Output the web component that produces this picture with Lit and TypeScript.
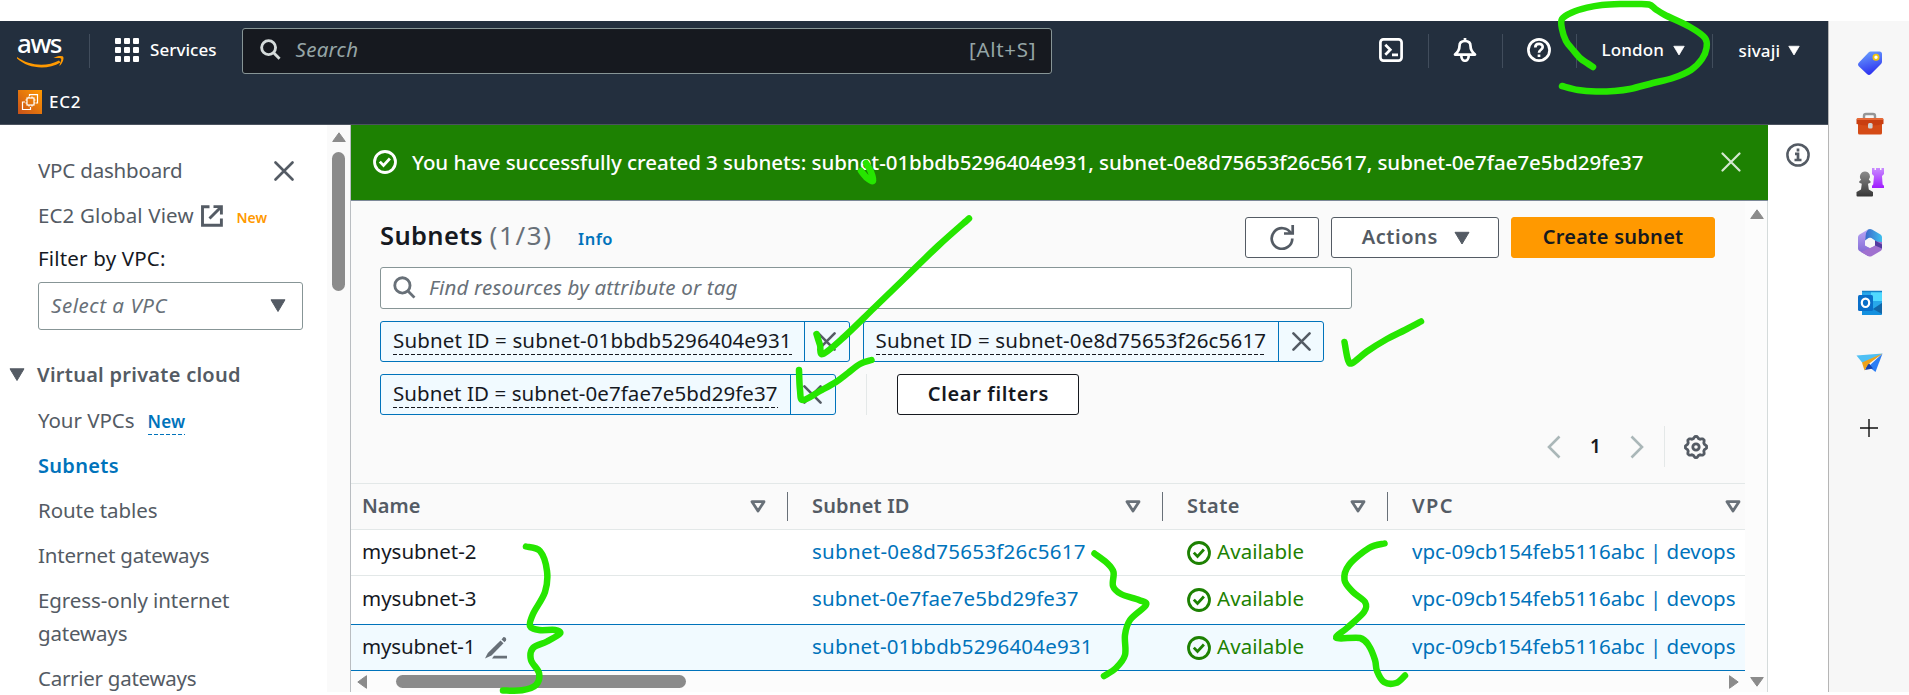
import { LitElement, html, svg, css } from "lit";
import { customElement } from "lit/decorators.js";
import { styleMap } from "lit/directives/style-map.js";

const FAMILY = '"Noto Sans", "Open Sans", sans-serif';
const ctx = document.createElement("canvas").getContext("2d")!;

/* Tracks a label so that it fills the given width. */
const t = (text: string, width: number, size = 20.5, weight = 400, italic = false, cls = "") => {
  ctx.font = `${italic ? "italic " : ""}${weight} ${size}px ${FAMILY}`;
  const gap = (width + 1.5 - ctx.measureText(text).width) / (text.length - 1);
  return html`<span class="t ${cls}" style=${styleMap({
    fontSize: size + "px",
    fontWeight: String(weight),
    fontStyle: italic ? "italic" : "normal",
    letterSpacing: gap.toFixed(3) + "px",
    marginRight: (-gap).toFixed(3) + "px",
  })}>${text}</span>`;
};

const down = (w = 16, h = 13) => html`<svg class="ic" width=${w} height=${h} viewBox="0 0 16 13"><path d="M1 .8h14L8 12.5z" fill="currentColor" stroke="currentColor" stroke-linejoin="round"/></svg>`;
const cross = (s = 20, sw = 2.6) => html`<svg class="ic" width=${s} height=${s} viewBox="0 0 20 20"><path d="M1.5 1.5l17 17M18.5 1.5l-17 17" stroke="currentColor" stroke-width=${sw} fill="none" stroke-linecap="round"/></svg>`;
const lens = (s: number, sw: number) => html`<svg class="ic" width=${s} height=${s} viewBox="0 0 22 22"><circle cx="9" cy="9" r="7.3" fill="none" stroke="currentColor" stroke-width=${sw}/><path d="M14.3 14.3l6.2 6.4" stroke="currentColor" stroke-width=${sw} /></svg>`;
const okIcon = html`<svg class="ic" width="24" height="24" viewBox="0 0 24 24" fill="none" stroke="currentColor" stroke-width="2.8"><circle cx="12" cy="12" r="10.5"/><path d="M6.8 11.6l3.7 3.9 6.4-7"/></svg>`;
const filterIcon = html`<svg class="ic" width="16" height="13" viewBox="0 0 16 13"><path d="M2 1.7h12L8 11z" fill="none" stroke="#687078" stroke-width="2.8" stroke-linejoin="round"/></svg>`;

/* Pen strokes drawn over the console. */
const strokes: number[][] = [
  [1562, 86, 1578, 90, 1596, 91.5, 1614, 91, 1630, 89, 1653, 83, 1673, 78, 1691, 70, 1702, 59, 1706.5, 48, 1705, 38, 1690, 27, 1665, 15, 1656, 9.5, 1649, 4.5, 1635, 4, 1620, 4, 1602, 5, 1587, 7.7, 1572, 12.5, 1562, 19, 1562, 29, 1566, 41, 1573, 50, 1580, 58, 1587, 63, 1593, 67],
  [866, 163, 871, 172, 873, 181, 867, 178, 861, 171],
  [969, 218.5, 938, 246, 905, 278, 874, 308, 844, 337, 823, 354, 820, 345, 816.5, 334],
  [871.5, 360, 860, 364, 848, 373, 836, 382, 820, 391, 803, 400, 800, 390, 799, 370],
  [1421, 321.5, 1405, 330, 1387, 339, 1367, 351.5, 1352.5, 363, 1348, 360, 1344.5, 342],
  [526, 546.5, 540, 551, 547, 571, 545, 592, 533, 614, 530, 626, 539, 630, 555, 630, 560, 633.5, 547, 641.5, 533, 648, 531, 660, 539, 673, 536, 685, 522, 690.3, 503, 690.5],
  [1094.5, 553.5, 1107, 563, 1113.5, 572, 1113, 586, 1121, 594, 1139, 600, 1146, 605, 1130, 620, 1125, 635, 1125, 655, 1116, 668, 1104, 676],
  [1384.5, 543.5, 1369, 548, 1349, 565, 1344.5, 580, 1353, 592, 1365, 602, 1364, 612, 1347, 628, 1336.5, 638, 1360, 638, 1369, 646, 1375, 660, 1377, 671, 1384, 682, 1396, 683, 1405, 675.5],
];
const smooth = (p: number[]) => {
  const n = p.length / 2;
  const at = (i: number) => { const k = Math.max(0, Math.min(n - 1, i)); return [p[2 * k], p[2 * k + 1]]; };
  let d = `M${p[0]} ${p[1]}`;
  for (let i = 0; i < n - 1; i++) {
    const [a, b, c, e] = [at(i - 1), at(i), at(i + 1), at(i + 2)];
    d += `C${b[0] + (c[0] - a[0]) / 6} ${b[1] + (c[1] - a[1]) / 6} ${c[0] - (e[0] - b[0]) / 6} ${c[1] - (e[1] - b[1]) / 6} ${c[0]} ${c[1]}`;
  }
  return d;
};

const teeth = (() => {
  let s = "";
  for (let i = 0; i < 64; i++) {
    const a = (i / 64) * Math.PI * 2;
    const r = 9.7 + 0.9 * Math.tanh(2.5 * Math.cos(8 * a));
    s += `${i ? "L" : "M"}${(12 + r * Math.sin(a)).toFixed(2)} ${(12 - r * Math.cos(a)).toFixed(2)}`;
  }
  return s + "z";
})();

const rows = [
  { name: "mysubnet-2", nw: 113, id: "subnet-0e8d75653f26c5617", w: 272, cls: "r1" },
  { name: "mysubnet-3", nw: 113, id: "subnet-0e7fae7e5bd29fe37", w: 265, cls: "r2" },
  { name: "mysubnet-1", nw: 112, id: "subnet-01bbdb5296404e931", w: 279, cls: "r3" },
];

@customElement("app-root")
class AppRoot extends LitElement {
  static styles = css`
    :host { display: block; position: relative; width: 1909px; height: 695px; overflow: hidden; background: #fff; font-family: "Noto Sans", "Open Sans", sans-serif; color: #16191f; }
    * { box-sizing: border-box; }
    .t { white-space: nowrap; display: inline-block; flex: none; }
    .ic { display: block; flex: none; }
    .fill { flex: 1; }
    .page { padding-top: 21px; height: 695px; display: flex; }
    .app { width: 1828px; display: flex; flex-direction: column; flex: none; }
    .top { height: 104px; background: #232f3e; border-bottom: 1px solid #4b535f; color: #fff; flex: none; }
    .row { display: flex; align-items: center; }
    .bar { height: 59px; padding: 0 28px 0 16px; }
    .bar > .t, .tools .t { margin-top: -2px; }
    .bar > .ic, .tools > .ic { margin-top: -1px; }
    .logo { display: flex; flex-direction: column; width: 48px; height: 36px; padding: 0 0 0 1px; }
    .logo .t { line-height: 24px; height: 23px; margin-top: -2px; }
    .vr { width: 1px; height: 34px; background: #414d5c; flex: none; }
    .v0 { margin-left: 25px; }
    .v1 { margin: 0 24.5px; }
    .v2 { margin: 0 25px 0 27px; }
    .lon { margin-right: 9.5px; display: flex; }
    .siv { padding-right: 8px; }
    .grid9 { margin: 0 11px 0 25px; }
    .search { width: 810px; height: 46px; margin: 0 0 0 25px; border: 1px solid #879596; border-radius: 3px; background: #16191f; color: #95a5a6; padding: 0 15px 2px 17px; }
    .search .t { margin-top: -1px; }
    .search .t.s { margin-left: 15px; }
    .search .ic { color: #d5dbdb; }
    .search .k { margin-left: auto; }
    .tools { margin-left: auto; }
    .fav { padding: 10px 0 0 18px; gap: 7px; height: 34px; }
    .fav .t { margin-top: -2px; }
    .main { height: 567px; display: flex; flex: none; }
    .side { width: 327px; padding: 29px 24px 0 38px; color: #545b64; flex: none; }
    .n { height: 33px; line-height: 33px; display: flex; align-items: center; margin-bottom: 12px; }
    .n .t { line-height: 33px; }
    .n.f { margin-top: -2px; margin-bottom: 7px; }
    .n.sec { margin: 28px 0 13px -29px; }
    .n.z { margin-bottom: 0; }
    .st { margin-left: 12px; }
    .gi { margin: 1px 14px 0 7px; }
    .nw { color: #f90; padding-top: 3px; }
    .n.vpcs { margin-bottom: 11.5px; }
    .vn { margin-left: 13px; height: 31px; margin-top: -2px; padding-top: 4px; background: repeating-linear-gradient(90deg, #0073bb 0 4px, transparent 4px 6px) left bottom / 100% 1.5px no-repeat; color: #0073bb; display: flex; align-items: center; }
    .dark { color: #16191f; }
    .select { height: 48px; width: 265px; border: 1px solid #879596; border-radius: 3px; padding: 0 16px 2px 12px; justify-content: space-between; color: #687078; }
    .select .t { margin-top: -1px; }
    .select .ic { color: #545b64; }
    .sb { width: 23px; background: #fafafa; flex: none; display: flex; flex-direction: column; align-items: center; padding: 7px 0 0 0; color: #8b8b8b; }
    .thumb { width: 13px; height: 139px; border-radius: 7px; background: #8b8b8b; margin-top: 10px; }
    .content { width: 1418px; border-left: 1px solid #b9bdc1; background: #fafafa; display: flex; flex-direction: column; flex: none; }
    .flash { height: 76px; background: #1d8102; border-bottom: 1px solid #7d8998; color: #fff; padding: 0 27px 1px 22px; flex: none; }
    .flash .m { margin-left: 15px; }
    .flash .c { margin-left: auto; color: #d5e8d0; }
    .scroll { display: flex; flex: 1; min-height: 0; border-right: 1px solid #d5dbdb; }
    .panel { width: 1394px; display: flex; flex-direction: column; flex: none; }
    .vs { width: 22px; display: flex; flex-direction: column; justify-content: space-between; align-items: center; padding: 8px 0 5px 1px; background: #fcfcfc; color: #8b8b8b; }
    .head { padding: 16px 30px 0 29px; height: 57px; }
    .head > .t { margin-top: -5px; }
    .count { color: #687078; display: flex; margin: -5px 0 0 7px; }
    .inf { margin: 1px 0 0 27px; display: flex; }
    .btn { height: 41px; border: 1px solid #545b64; border-radius: 3px; background: #fff; color: #545b64; display: flex; align-items: center; justify-content: center; flex: none; margin-left: 12px; }
    .btn .t { margin-top: -3px; }
    .refresh { width: 74px; padding-bottom: 2px; }
    .actions { width: 168px; gap: 17px; padding-left: 2px; }
    .orange { width: 204px; background: #ff9900; border-color: #ff9900; color: #16191f; }
    .find { width: 972px; height: 42px; margin: 9px 0 0 29px; border: 1px solid #879596; border-radius: 3px; background: #fff; color: #687078; padding: 0 12px 1px; }
    .find .t { margin: -1px 0 0 13px; }
    .tokens { display: flex; padding: 12px 0 0 29px; gap: 13px; }
    .tok { display: flex; height: 41px; border: 1px solid #0073bb; border-radius: 3px; background: #f1faff; flex: none; }
    .tok .l { padding: 0 12px; border-right: 1px solid #0073bb; }
    .dash { height: 33px; background: repeating-linear-gradient(90deg, #16191f 0 4px, transparent 4px 6px) left bottom / 100% 1.5px no-repeat; }
    .dash .t { line-height: 37px; }
    .tok .x { width: 44px; display: flex; align-items: center; justify-content: center; color: #545b64; }
    .sep { width: 1px; height: 41px; background: #e4e8e8; flex: none; }
    .sep.a { margin-left: 17px; }
    .sep.b { margin: 0 19px 0 20px; }
    .clear { width: 182px; border-color: #16191f; color: #16191f; margin-left: 17px; padding-left: 1px; }
    .pager { margin-top: 11px; height: 41px; padding-right: 37px; justify-content: flex-end; color: #aab7b8; }
    .num { width: 69px; text-align: center; font-size: 19px; font-weight: 600; margin-top: -1px; }
    .table { margin-top: 16px; }
    .tr { display: grid; grid-template-columns: 437px 375px 225px 357px; align-items: center; }
    .tr > div { display: flex; align-items: center; padding-left: 24px; height: 100%; }
    .tr > div:first-child { padding-left: 11px; }
    .th { height: 47px; border-top: 1px solid #e3e8e8; border-bottom: 1px solid #e3e8e8; color: #545b64; }
    .th .ic { margin-left: auto; margin-right: 21px; }
    .th > div:last-child .ic { margin-right: 4px; }
    .th .vr { height: 29px; background: #687078; }
    .th .t { margin-top: -2px; }
    .r1 { height: 46px; background: #fff; border-bottom: 1px solid #e3e8e8; }
    .r2 { height: 48px; background: #fff; padding-bottom: 1px; }
    .r3 { height: 47px; background: #f1faff; border-top: 1px solid #0073bb; border-bottom: 1px solid #0073bb; }
    .link { color: #0073bb; }
    .ok { color: #1d8102; }
    .ok .t { margin-left: 6px; }
    .tr .cellt { margin-top: -4px; }
    .pen { margin-left: 9px; }
    .hs { flex: 1; background: #fcfcfc; padding: 4px 6px 0 6px; display: flex; color: #8b8b8b; align-items: flex-start; }
    .hthumb { width: 290px; height: 13px; border-radius: 7px; background: #8b8b8b; margin-left: 29px; }
    .info { flex: 1; padding: 18px 0 0 18px; }
    .edge { flex: 1; height: 671px; border-left: 1px solid #b5b5b5; background: #f7f7f7; display: flex; flex-direction: column; align-items: center; padding: 27px 0 0 2px; gap: 30px; }
    .plus { margin: 11px 2px 0 0; }
    .ink { position: absolute; left: 0; top: 0; }
  `;

  nav() {
    return html`<nav class="side">
      <div class="n">${t("VPC dashboard", 143)}<span class="fill"></span><svg class="ic" width="30" height="20" viewBox="0 0 30 20"><path d="M2.5 1.5l17 17M19.500 1.5l-17 17" stroke="#545b64" stroke-width="2.6" stroke-linecap="round"/></svg></div>
      <div class="n">${t("EC2 Global View", 154)}
        <svg class="ic gi" width="22" height="22" viewBox="0 0 22 22" fill="none" stroke="#545b64" stroke-width="2.9"><path d="M8.5 1.8H1.5V20.2H20.4V13.5M12.5 1.6H20.4V9.5M20 2L8.5 13.5"/></svg>
        ${t("New", 29, 14, 600, false, "nw")}</div>
      <div class="n dark f">${t("Filter by VPC:", 126)}</div>
      <div class="row select">${t("Select a VPC", 114, 20.5, 400, true)}${down(16, 13)}</div>
      <div class="n sec">${down(16, 13)}${t("Virtual private cloud", 202, 20, 600, false, "st")}</div>
      <div class="n vpcs">${t("Your VPCs", 95)}<span class="vn">${t("New", 36, 17, 600)}</span></div>
      <div class="n link">${t("Subnets", 79, 20, 600)}</div>
      <div class="n">${t("Route tables", 118)}</div>
      <div class="n">${t("Internet gateways", 170)}</div>
      <div class="n z">${t("Egress-only internet", 190)}</div>
      <div class="n">${t("gateways", 88)}</div>
      <div class="n">${t("Carrier gateways", 157)}</div>
    </nav>`;
  }

  header() {
    return html`<header class="top">
      <div class="row bar">
        <div class="logo">${t("aws", 44, 26, 500)}
          <svg class="ic" width="48" height="14" viewBox="0 0 48 14"><path d="M0 3C12 12 30 13 42 6.5L43.5 8.5C30 16.500 11 14.500 0 4.500z" fill="#f90"/><path d="M36.500 4C40 1.500 45 1.500 46 2.500C47.300 4 46 9 42.500 12C42.500 9.500 45 6 44 4.700C43 3.600 39 4.300 36.500 4z" fill="#f90"/></svg>
        </div>
        <span class="vr v0"></span>
        <svg class="ic grid9" width="24" height="24" viewBox="0 0 24 24" fill="#fff">${[0, 9, 18].map(y => [0, 9, 18].map(x => svg`<rect x=${x} y=${y} width="6" height="6" rx="1"/>`))}</svg>
        ${t("Services", 65, 17, 500)}
        <div class="row search">${lens(21, 3)}${t("Search", 61, 20.5, 400, true, "s")}${t("[Alt+S]", 65, 20.5, 400, false, "k")}</div>
        <div class="row tools">
          <svg class="ic" width="24" height="24" viewBox="0 0 24 24" fill="none" stroke="#fff" stroke-width="2.7"><rect x="1.400" y="1.400" width="21.200" height="21.200" rx="3"/><path d="M6.300 6.800l5 5-5 5M13 16.800h6"/></svg>
          <span class="vr v1"></span>
          <svg class="ic" width="24" height="24" viewBox="0 0 24 24" fill="none" stroke="#fff" stroke-width="2.7"><path d="M2 16.600C5 14 6.500 11.500 6.500 8C6.500 4.500 9 3 12 3S17.500 4.500 17.500 8C17.500 11.500 19 14 22 16.600z" stroke-linejoin="round"/><path d="M12 0v3M8.300 17.500c0 7 7.400 7 7.400 0"/></svg>
          <span class="vr v1"></span>
          <svg class="ic" width="24" height="24" viewBox="0 0 24 24" fill="none" stroke="#fff" stroke-width="2.7"><circle cx="12" cy="12" r="10.600"/><path d="M8.300 9.500c0-4.700 7.400-4.700 7.400-.5c0 3-3.700 2.500-3.700 5.800M12 16.500v2.600"/></svg>
          <span class="vr v1"></span>
          <span class="lon">${t("London", 61, 17, 500)}</span>${down(12, 11)}
          <span class="vr v2"></span>
          <span class="siv">${t("sivaji", 40, 17, 500)}</span>${down(12, 11)}
        </div>
      </div>
      <div class="row fav">
        <svg class="ic" width="24" height="24" viewBox="0 0 24 24"><defs><linearGradient id="eg" x1="0" y1="1" x2="1" y2="0"><stop stop-color="#c8511b"/><stop offset="1" stop-color="#f90"/></linearGradient></defs><rect width="24" height="24" fill="url(#eg)"/><g fill="none" stroke="#fff" stroke-width="1.200"><path d="M11.500 6V4.600H19.500V13H18M7 12H4.500V19.500H12.500V17"/><rect x="9" y="8" width="7" height="7"/><path d="M11 6.500V8M14 6.500V8M11 15v1.500M14 15v1.500M7.500 10H9M7.500 13H9M16 10h1.500M16 13h1.500"/></g></svg>
        ${t("EC2", 30, 17, 500)}
      </div>
    </header>`;
  }

  token(text: string, w: number) {
    return html`<div class="tok"><div class="l"><div class="dash">${t(text, w - 2)}</div></div><div class="x">${cross(19, 2.7)}</div></div>`;
  }

  table() {
    const hd = (s: string, w: number) => html`${t(s, w, 20, 600)}${filterIcon}`;
    return html`<div class="table">
      <div class="tr th"><div>${hd("Name", 57)}<span class="vr"></span></div><div>${hd("Subnet ID", 96)}<span class="vr"></span></div><div>${hd("State", 51)}<span class="vr"></span></div><div>${hd("VPC", 39)}</div></div>
      ${rows.map(r => html`<div class="tr ${r.cls}">
        <div>${t(r.name, r.nw, 20.5, 400, false, "cellt")}${r.cls === "r3" ? html`<svg class="ic pen" width="22" height="22" viewBox="0 0 22 22" fill="#687078"><path d="M18.500 0c2 0 3.300 1.800 2.500 3.500l-1.500 1.700-3-2.800z"/><path d="M15.500 3.500l3 2.800L6.500 18.500 0 21.500l2.800-5.600z"/><path d="M9 18.800h13v2.700H7z"/></svg>` : ""}</div>
        <div class="link">${t(r.id, r.w, 20.5, 400, false, "cellt")}</div>
        <div class="ok">${okIcon}${t("Available", 85.5, 20.5, 400, false, "cellt")}</div>
        <div class="link">${t("vpc-09cb154feb5116abc | devops", 322, 20.5, 400, false, "cellt")}</div>
      </div>`)}
    </div>`;
  }

  edge() {
    return html`<aside class="edge">
      <svg class="ic" width="30" height="30" viewBox="0 0 30 30"><defs><linearGradient id="g1" x1="0" y1="0" x2=".3" y2="1"><stop stop-color="#6ea8ff"/><stop offset="1" stop-color="#2f35f0"/></linearGradient></defs><path d="M15.500 3.500H24.500Q27 3.500 27 6V13.500Q27 15 26 16L16 26Q14 28 12 26L4 18.500Q2 16.500 4 14.500L13.500 4.500Q14.500 3.500 15.500 3.500z" fill="url(#g1)"/><circle cx="21" cy="9.300" r="2.600" fill="#fff" stroke="#f0c40c" stroke-width="1.800"/></svg>
      <svg class="ic" width="30" height="30" viewBox="0 0 30 30"><path d="M9 11V8q0-2 2-2h7q2 0 2 2v3" fill="none" stroke="#969696" stroke-width="2.400"/><path d="M3 14h24v11q0 1.500-1.500 1.500h-21Q3 26.500 3 25z" fill="#d54b16"/><path d="M3 10h24q1.500 0 1.500 1.500V16q-6 1.500-13.500 1.500T1.500 16v-4.500Q1.500 10 3 10z" fill="#c93e10"/><path d="M2 11h26" stroke="#ef7743" stroke-width="1.500"/><rect x="13" y="15" width="4.600" height="5.500" rx="1.500" fill="#d1d1d1"/></svg>
      <svg class="ic" width="30" height="30" viewBox="0 0 30 30"><defs><linearGradient id="g2" x1="0" y1="0" x2="0" y2="1"><stop stop-color="#8b8b8b"/><stop offset="1" stop-color="#373737"/></linearGradient><linearGradient id="g3" x1="0" y1="0" x2="0" y2="1"><stop stop-color="#c98cff"/><stop offset="1" stop-color="#a01cff"/></linearGradient></defs><path d="M17 0h2.500v2H21V0h4v2h1.500V0H29v6l-2 2 .6 8.500 1.400 1.200V20H17v-2.300l1.200-1.200L19 8l-2-2z" fill="url(#g3)"/><path d="M10 3.500a5 5 0 0 1 3.800 8.300l1.700 1.400v1.600l-2.500 1 .8 5.700 4.200 2.500v3.500q0 1-1 1H2.500q-1 0-1-1V24l4.500-2.500.8-5.700-2.500-1v-1.600L6.200 11.800A5 5 0 0 1 10 3.500z" fill="url(#g2)"/></svg>
      <svg class="ic" width="30" height="30" viewBox="0 0 30 30"><defs><linearGradient id="g4" x1="0" y1="0" x2="0" y2="1"><stop stop-color="#b8a5f5"/><stop offset="1" stop-color="#7c62cf"/></linearGradient><linearGradient id="g5" x1="0" y1="0" x2="1" y2="0"><stop stop-color="#3b62c8"/><stop offset="1" stop-color="#3fc0ee"/></linearGradient></defs><path d="M13 1.500L4.500 6.500Q3 7.500 3 9v11.500q0 1.500 1.500 2.500L13 28 15 20 10 17.500v-5z" fill="url(#g4)"/><path d="M13 1.500Q15 .5 17 1.500L25.500 6.500Q27 7.500 27 9V19L20 15.500V12.500L15 9.500 10 12.500 9.500 17 11 5z" fill="url(#g5)"/><path d="M27 14v6.500q0 1.500-1.500 2.500L17 28q-2 1-4 0L6 24 15 20l5-2.500v-4z" fill="#a071cf"/><path d="M20 12.500L27 16.500V20.500L20 17.500z" fill="#533a9e"/><circle cx="15" cy="14.700" r="4.600" fill="#f7f7f7"/></svg>
      <svg class="ic" width="30" height="30" viewBox="0 0 30 30"><rect x="7" y="3" width="20" height="24" rx="1.500" fill="#28a8ea"/><path d="M16 4h11v9H16z" fill="#50d9ff"/><path d="M7 3.500h20" stroke="#1482c8" stroke-width="1.500"/><path d="M7 15l11 6 9-6v10.500q0 1.500-1.500 1.500H7z" fill="#1490df"/><path d="M27 15v11l-9-5z" fill="#1267a8"/><rect x="3" y="7" width="15" height="16" rx="1.500" fill="#0a6fc9"/><ellipse cx="10.500" cy="14.800" rx="3.700" ry="4.200" fill="none" stroke="#fff" stroke-width="2.200"/></svg>
      <svg class="ic" width="30" height="30" viewBox="0 0 30 30"><path d="M1.500 7.500L27.500 5.500 18 12 7.500 15z" fill="#4fc0f4"/><path d="M27.500 5.500L20.500 24 13.500 18.500z" fill="#2b7df5"/><path d="M10 22l3-8 5 6.500z" fill="#1644b0"/><path d="M27.500 5.500L7 14.500 9.500 22.500 13 16.500z" fill="#eda21c"/></svg>
      <svg class="ic plus" width="18" height="18" viewBox="0 0 18 18"><path d="M0 9H18M9 0V18" stroke="#111" stroke-width="1.400"/></svg>
    </aside>`;
  }

  render() {
    return html`
      <div class="page">
        <div class="app">
          ${this.header()}
          <div class="main">
            ${this.nav()}
            <div class="sb"><svg class="ic" width="14" height="10" viewBox="0 0 14 10"><path d="M7 .8L13.300 9.500H.7z" fill="currentColor" stroke="currentColor" stroke-linejoin="round"/></svg><div class="thumb"></div></div>
            <main class="content">
              <div class="row flash">${okIcon}${t("You have successfully created 3 subnets: subnet-01bbdb5296404e931, subnet-0e8d75653f26c5617, subnet-0e7fae7e5bd29fe37", 1230, 20.5, 500, false, "m")}<span class="c">${cross(20, 2.2)}</span></div>
              <div class="scroll">
                <div class="panel">
                  <div class="row head">
                    ${t("Subnets", 101, 25.5, 600)}<span class="count">${t("(1/3)", 60, 26)}</span><span class="link inf">${t("Info", 33, 16.5, 600)}</span>
                    <span class="fill"></span>
                    <div class="btn refresh"><svg class="ic" width="26" height="26" viewBox="0 0 26 26" fill="none" stroke="#545b64" stroke-width="2.700"><path d="M22 9.500A10.300 10.300 0 1 0 23.300 14.500M23.700 1V9.500H15"/></svg></div>
                    <div class="btn actions">${t("Actions", 74, 20, 600)}${down(16, 14)}</div>
                    <div class="btn orange">${t("Create subnet", 139, 20, 600)}</div>
                  </div>
                  <div class="row find">${lens(23, 2.7)}${t("Find resources by attribute or tag", 307, 20.5, 400, true)}</div>
                  <div class="tokens">${this.token("Subnet ID = subnet-01bbdb5296404e931", 399)}${this.token("Subnet ID = subnet-0e8d75653f26c5617", 391)}</div>
                  <div class="tokens">${this.token("Subnet ID = subnet-0e7fae7e5bd29fe37", 385)}<span class="sep a"></span><div class="btn clear">${t("Clear filters", 119, 20, 600)}</div></div>
                  <div class="row pager">
                    <svg class="ic" width="14" height="24" viewBox="0 0 14 24"><path d="M12.500 1.500L2 12l10.500 10.500" fill="none" stroke="currentColor" stroke-width="2.600"/></svg>
                    <span class="dark num">1</span>
                    <svg class="ic" width="14" height="24" viewBox="0 0 14 24"><path d="M1.500 1.500L12 12 1.500 22.500" fill="none" stroke="currentColor" stroke-width="2.600"/></svg>
                    <span class="sep b"></span>
                    <svg class="ic" width="24" height="24" viewBox="0 0 24 24" fill="none" stroke="#545b64" stroke-width="2.800"><path d=${teeth}/><circle cx="12" cy="12" r="3.200"/></svg>
                  </div>
                  ${this.table()}
                  <div class="hs"><svg class="ic" width="10" height="14" viewBox="0 0 10 14"><path d="M9.500 .7V13.300L.8 7z" fill="currentColor" stroke="currentColor" stroke-linejoin="round"/></svg><div class="hthumb"></div><span class="fill"></span><svg class="ic" width="10" height="14" viewBox="0 0 10 14"><path d="M.5 .7V13.300L9.200 7z" fill="currentColor" stroke="currentColor" stroke-linejoin="round"/></svg></div>
                </div>
                <div class="vs"><svg class="ic" width="14" height="10" viewBox="0 0 14 10"><path d="M7 .8L13.300 9.500H.7z" fill="currentColor" stroke="currentColor" stroke-linejoin="round"/></svg><svg class="ic" width="14" height="10" viewBox="0 0 14 10"><path d="M7 9.200L13.300 .5H.7z" fill="currentColor" stroke="currentColor" stroke-linejoin="round"/></svg></div>
              </div>
            </main>
            <div class="info"><svg class="ic" width="24" height="24" viewBox="0 0 24 24" fill="none" stroke="#545b64" stroke-width="2.500"><circle cx="12" cy="12" r="10.600"/><path d="M12 5.500v3M9 10.800h3v6M8.500 17h7" stroke-width="2.700"/></svg></div>
          </div>
        </div>
        ${this.edge()}
      </div>
      <svg class="ink" width="1909" height="695" fill="none" stroke="#26e600" stroke-width="6.500" stroke-linecap="round" stroke-linejoin="round">${strokes.map(p => svg`<path d=${smooth(p)}/>`)}</svg>`;
  }
}
export { AppRoot };
